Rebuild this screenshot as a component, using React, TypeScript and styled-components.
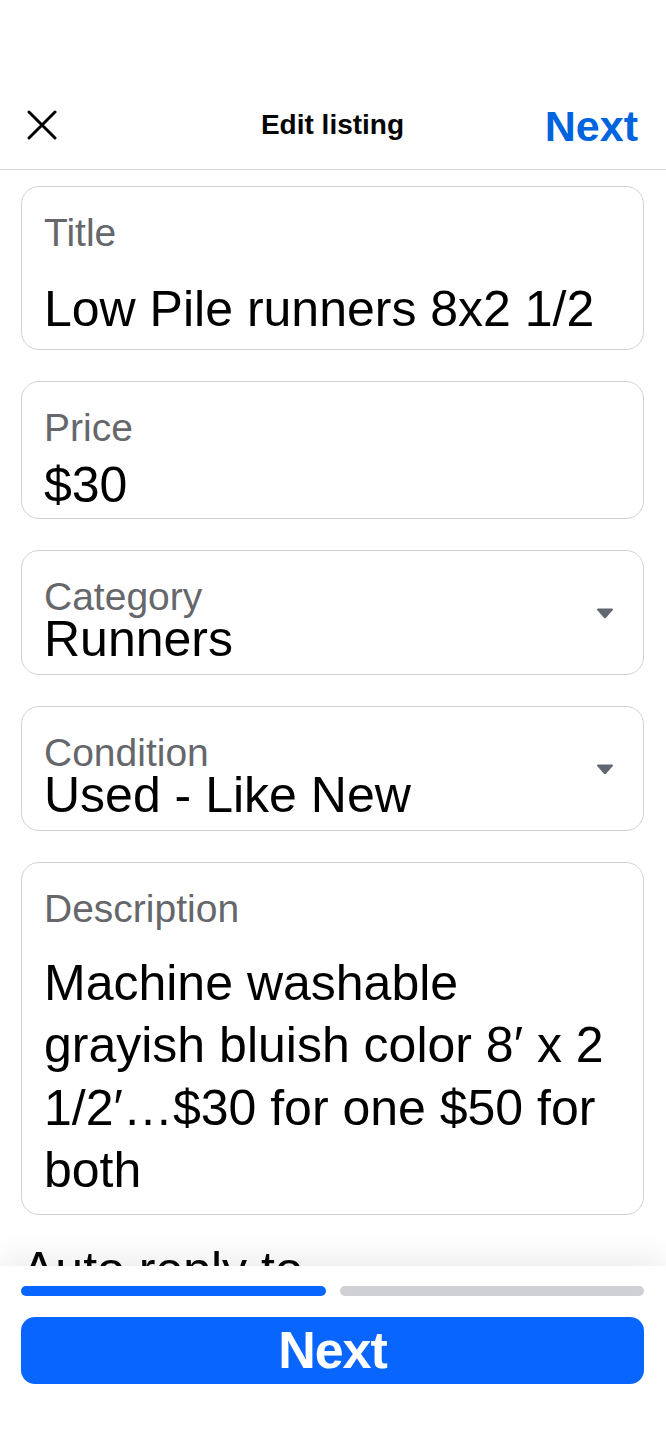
import React from "react";
import styled, { createGlobalStyle } from "styled-components";

const GlobalStyle = createGlobalStyle`
  html, body {
    margin: 0;
    padding: 0;
    background: #ffffff;
  }
  body {
    font-family: "Liberation Sans", Arial, Helvetica, sans-serif;
    color: #000000;
  }
  * { box-sizing: border-box; }
`;

const Page = styled.div`
  width: 100%;
  min-height: 1440px;
  padding-bottom: 200px;
  background: #ffffff;
`;

const StatusSpace = styled.div`
  height: 90px;
`;

const Header = styled.header`
  height: 80px;
  display: grid;
  grid-template-columns: 1fr auto 1fr;
  align-items: center;
  padding: 0 28px 10px 27px;
  border-bottom: 1px solid #d6d8db;
`;

const CloseButton = styled.button`
  justify-self: start;
  width: 30px;
  height: 30px;
  padding: 0;
  border: none;
  background: none;
  display: flex;
  align-items: center;
  justify-content: center;
  color: #000;
`;

const HeaderTitle = styled.h1`
  margin: 0;
  font-size: 28px;
  font-weight: 700;
  line-height: 34px;
  color: #050505;
`;

const HeaderAction = styled.span`
  justify-self: end;
  font-size: 43px;
  font-weight: 700;
  line-height: 50px;
  color: #0064e0;
  margin-top: 2px;
`;

const Form = styled.div`
  display: flex;
  flex-direction: column;
  gap: 31px;
  padding: 16px 22px 0 21px;
`;

const Field = styled.div<{ $pb: number }>`
  border: 1.5px solid #cfd2d6;
  border-radius: 18px;
  padding: 26px 22px ${(p) => p.$pb}px 22px;
  display: flex;
  align-items: center;
  gap: 12px;
`;

const FieldBody = styled.div`
  flex: 1;
  min-width: 0;
  display: flex;
  flex-direction: column;
`;

const Label = styled.div`
  font-size: 39px;
  line-height: 39px;
  color: #65676b;
`;

const Value = styled.div<{ $lh: number; $mt: number }>`
  font-size: 50px;
  line-height: ${(p) => p.$lh}px;
  margin-top: ${(p) => p.$mt}px;
  color: #000000;
  overflow-wrap: break-word;
`;

const Caret = styled.svg`
  flex: none;
  width: 18px;
  height: 11px;
  margin-right: 7px;
  margin-bottom: 12px;
`;

const SectionHeading = styled.h2`
  margin: 24px 0 0 22px;
  font-size: 50px;
  line-height: 62px;
  font-weight: 400;
  color: #050505;
`;

const BottomBar = styled.div`
  position: fixed;
  left: 0;
  right: 0;
  bottom: 0;
  height: 174px;
  background: #ffffff;
  padding: 20px 22px 0 21px;
  box-shadow: 0 -10px 28px rgba(0, 0, 0, 0.07);
`;

const Progress = styled.div`
  display: flex;
  gap: 14px;
`;

const ProgressSegment = styled.div<{ $active: boolean }>`
  flex: 1;
  height: 10px;
  border-radius: 5px;
  background: ${(p) => (p.$active ? "#0866ff" : "#ced0d4")};
`;

const PrimaryButton = styled.button`
  margin-top: 21px;
  width: 100%;
  height: 67px;
  border: none;
  border-radius: 14px;
  background: #0866ff;
  color: #ffffff;
  font-family: "Liberation Sans", Arial, sans-serif;
  font-size: 52px;
  font-weight: 700;
  letter-spacing: -1px;
  line-height: 67px;
  padding: 0;
`;

const CaretIcon = () => (
  <Caret viewBox="0 0 18 11" aria-hidden>
    <path
      d="M2.2 0.5 H15.8 Q17.9 0.5 16.6 2.2 L10.3 9.6 Q9 11 7.7 9.6 L1.4 2.2 Q0.1 0.5 2.2 0.5 Z"
      fill="#606770"
    />
  </Caret>
);

type FieldDef = {
  label: string;
  value: string;
  lh: number;
  mt: number;
  pb: number;
  dropdown?: boolean;
};

const fields: FieldDef[] = [
  { label: "Title", value: "Low Pile runners 8x2 1/2", lh: 62.5, mt: 26, pb: 8 },
  { label: "Price", value: "$30", lh: 50, mt: 13, pb: 8 },
  { label: "Category", value: "Runners", lh: 46, mt: 0, pb: 12, dropdown: true },
  { label: "Condition", value: "Used - Like New", lh: 46, mt: 0, pb: 12, dropdown: true },
  {
    label: "Description",
    value: "Machine washable grayish bluish color 8\u2032 x 2 1/2\u2032\u2026$30 for one $50 for both",
    lh: 62.5,
    mt: 24,
    pb: 12,
  },
];

export default function App() {
  return (
    <Page>
      <GlobalStyle />
      <StatusSpace />
      <Header>
        <CloseButton aria-label="Close">
          <svg width="30" height="30" viewBox="0 0 30 30" aria-hidden>
            <path
              d="M2 2 L28 28 M28 2 L2 28"
              stroke="#000"
              strokeWidth="3"
              strokeLinecap="round"
            />
          </svg>
        </CloseButton>
        <HeaderTitle>Edit listing</HeaderTitle>
        <HeaderAction>Next</HeaderAction>
      </Header>
      <Form>
        {fields.map((f) => (
          <Field key={f.label} $pb={f.pb}>
            <FieldBody>
              <Label>{f.label}</Label>
              <Value $lh={f.lh} $mt={f.mt}>
                {f.value}
              </Value>
            </FieldBody>
            {f.dropdown && <CaretIcon />}
          </Field>
        ))}
      </Form>
      <SectionHeading>Auto reply to</SectionHeading>
      <BottomBar>
        <Progress>
          <ProgressSegment $active />
          <ProgressSegment $active={false} />
        </Progress>
        <PrimaryButton>Next</PrimaryButton>
      </BottomBar>
    </Page>
  );
}
